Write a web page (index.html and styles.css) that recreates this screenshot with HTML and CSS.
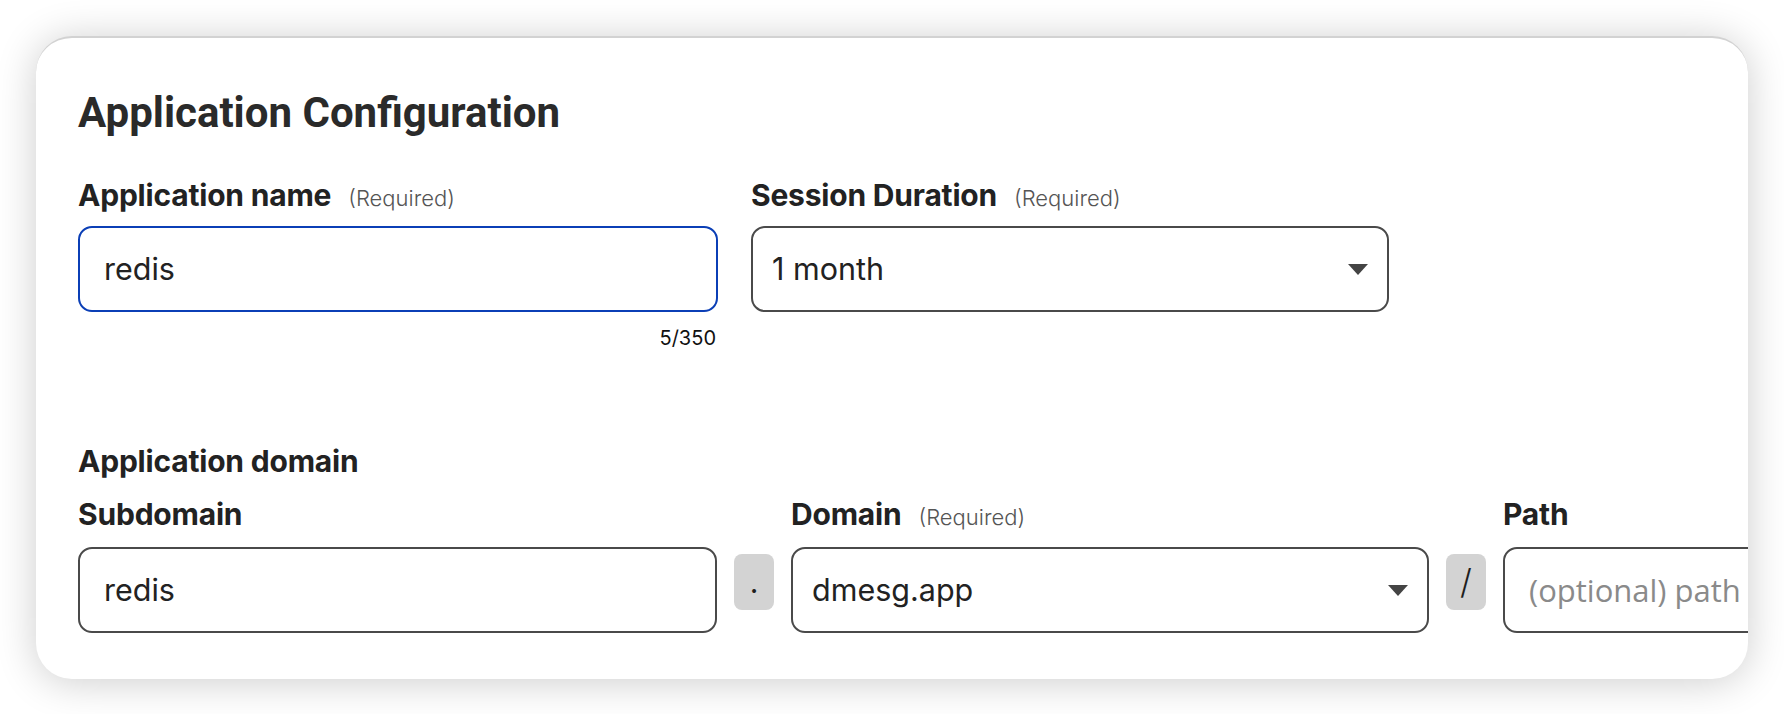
FILE: index.html
```html
<!DOCTYPE html>
<html lang="en">
<head>
<meta charset="utf-8">
<title>Application Configuration</title>
<link rel="stylesheet" href="styles.css">
</head>
<body>
<div class="page">
  <section class="card">
    <h1 class="title">Application Configuration</h1>

    <div class="row row-top">
      <div class="field field-name">
        <div class="label">Application name<span class="req">(Required)</span></div>
        <div class="input input-focus">redis</div>
        <div class="counter">5/350</div>
      </div>
      <div class="field field-session">
        <div class="label">Session Duration<span class="req">(Required)</span></div>
        <div class="select">
          <span>1 month</span>
          <svg class="caret" width="20" height="11" viewBox="0 0 20 11"><polygon points="0,0 20,0 10,11" fill="#444"/></svg>
        </div>
      </div>
    </div>

    <div class="section-label">Application domain</div>

    <div class="row row-domain">
      <div class="field field-sub">
        <div class="label">Subdomain</div>
        <div class="input input-plain">redis</div>
      </div>
      <div class="sep sep-dot">.</div>
      <div class="field field-domain">
        <div class="label">Domain<span class="req">(Required)</span></div>
        <div class="select">
          <span>dmesg.app</span>
          <svg class="caret" width="20" height="11" viewBox="0 0 20 11"><polygon points="0,0 20,0 10,11" fill="#444"/></svg>
        </div>
      </div>
      <div class="sep sep-slash">/</div>
      <div class="field field-path">
        <div class="label">Path</div>
        <div class="input input-plain input-path"><span class="placeholder">(optional) path</span></div>
      </div>
    </div>
  </section>
</div>
</body>
</html>
```

FILE: styles.css
```css
* { box-sizing: border-box; }

html, body {
  margin: 0;
  padding: 0;
  background: #ffffff;
}

.page {
  padding: 36px;
  font-family: "Inter", "Noto Sans", sans-serif;
  color: #222222;
}

.card {
  background: #ffffff;
  border-top: 2px solid #d2d2d2;
  border-radius: 36px;
  box-shadow: 0 3px 40px rgba(0, 0, 0, 0.2);
  padding: 51px 0 46px 42px;
  overflow: hidden;
}

.title {
  margin: 0 0 40px 0;
  font-family: "Roboto", "Inter", sans-serif;
  font-weight: 700;
  font-size: 42px;
  line-height: 48px;
  color: #2a2a2a;
}

.row {
  display: flex;
}

.row-top {
  gap: 33px;
  align-items: flex-start;
}

.row-domain {
  gap: 17px;
  align-items: flex-end;
}

.field {
  display: flex;
  flex-direction: column;
  flex-shrink: 0;
}

.field-name { width: 640px; }
.field-session { width: 638px; }
.field-sub { width: 639px; }
.field-domain { width: 638px; }
.field-path { width: 640px; }

.label {
  font-weight: 700;
  font-size: 30px;
  line-height: 36px;
  height: 36px;
  letter-spacing: -0.2px;
  color: #222222;
  margin-bottom: 13px;
  white-space: nowrap;
}

.row-domain .label {
  margin-bottom: 15px;
}

.req {
  font-weight: 300;
  font-size: 22px;
  line-height: 1;
  letter-spacing: 0;
  color: #555555;
  margin-left: 17px;
}

.input,
.select {
  height: 86px;
  border-radius: 14px;
  display: flex;
  align-items: center;
  font-size: 30.5px;
  line-height: 36px;
  color: #222222;
}

.input-focus {
  border: 2px solid #0b3fb6;
  padding-left: 24px;
}

.input-plain {
  border: 2px solid #4a4a4a;
  padding-left: 24px;
}

.input-path {
  padding-left: 24px;
}

.placeholder {
  font-family: "Open Sans", "Noto Sans", sans-serif;
  font-size: 31px;
  color: #8a8a8a;
}

.select {
  border: 2px solid #4a4a4a;
  padding: 0 19px 0 19px;
  justify-content: space-between;
}

.caret {
  display: block;
  flex-shrink: 0;
}

.counter {
  margin-top: 14px;
  font-size: 20px;
  line-height: 24px;
  text-align: right;
  padding-right: 2px;
  color: #111111;
}

.section-label {
  margin-top: 93px;
  margin-bottom: 17px;
  font-weight: 700;
  font-size: 30px;
  line-height: 36px;
  letter-spacing: -0.2px;
  color: #222222;
}

.sep {
  flex-shrink: 0;
  width: 40px;
  height: 56px;
  margin-bottom: 23px;
  border-radius: 8px;
  background: #d3d3d3;
  display: flex;
  align-items: center;
  justify-content: center;
  color: #1e1e1e;
}

.sep-dot {
  font-size: 30px;
  line-height: 36px;
}

.sep-slash {
  font-size: 34px;
  line-height: 40px;
  font-weight: 300;
}
```
